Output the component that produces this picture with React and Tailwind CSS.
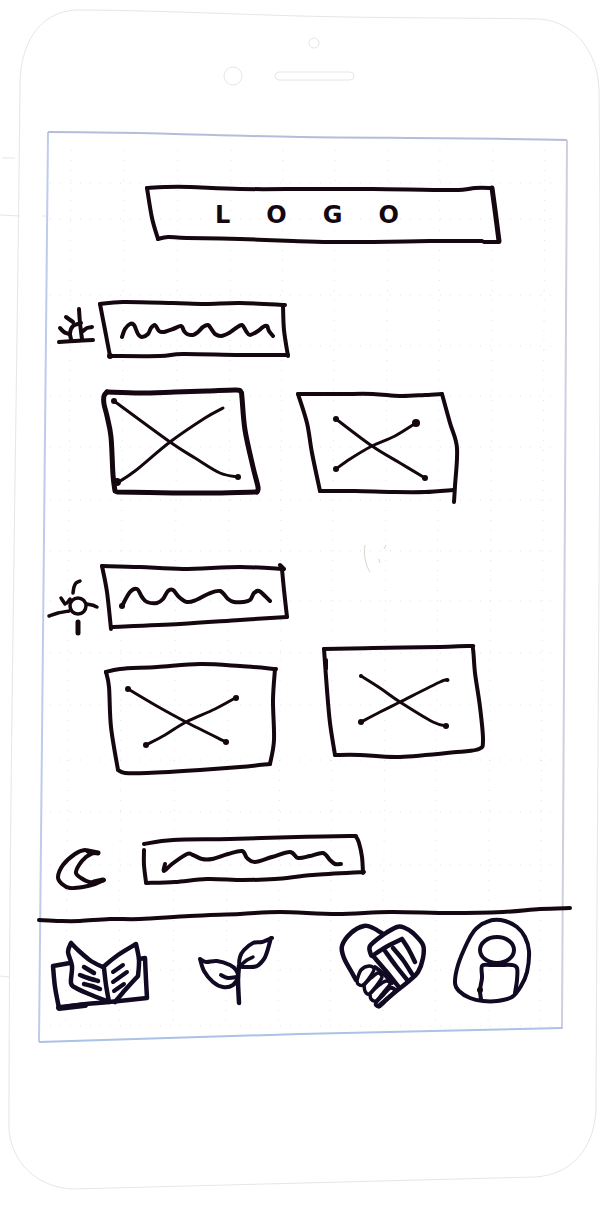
// Turns "x,y x,y | x,y x,y" into smooth pen strokes; "|" lifts the pen.
function pen(points) {
  return points
    .split("|")
    .map((part) => {
      const p = part.trim().split(/\s+/).map((s) => s.split(",").map(Number));
      let d = `M${p[0][0]} ${p[0][1]}`;
      for (let i = 0; i < p.length - 1; i++) {
        const a = p[i - 1] || p[i];
        const b = p[i];
        const c = p[i + 1];
        const e = p[i + 2] || c;
        d += `C${b[0] + (c[0] - a[0]) / 6} ${b[1] + (c[1] - a[1]) / 6} ${c[0] - (e[0] - b[0]) / 6} ${c[1] - (e[1] - b[1]) / 6} ${c[0]} ${c[1]}`;
      }
      return d;
    })
    .join("");
}

function Ink({ box, className, label, color = "stroke-[#14070f]", children }) {
  return (
    <svg
      viewBox={box}
      className={`block overflow-visible fill-none ${color} ${className}`}
      strokeWidth="4"
      strokeLinecap="round"
      strokeLinejoin="round"
      role={label ? "img" : undefined}
      aria-label={label}
      aria-hidden={label ? undefined : true}
    >
      {children}
    </svg>
  );
}

const P = ({ d, w }) => <path d={pen(d)} strokeWidth={w} />;
const Dot = ({ x, y, r = 3 }) => <circle cx={x} cy={y} r={r} className="fill-[#14070f] stroke-none" />;

const columns = [71, 124, 178, 231, 283, 335, 388, 440, 493, 545];
const rows = [183, 219, 295, 346, 396, 447, 500, 551, 601, 653, 705, 760, 812, 865, 970, 1026];

function Phone() {
  return (
    <svg
      viewBox="0 0 600 1212"
      preserveAspectRatio="none"
      className="pointer-events-none absolute inset-0 h-full w-full fill-none"
      aria-hidden="true"
    >
      <g stroke="#e6e6e8" strokeWidth="1">
        <path d="M76 10C140 10 230 14 300 16S480 18 540 19C575 22 598 52 599 90C602 350 597 800 596 1110C594 1150 570 1175 535 1177L72 1189C36 1187 12 1162 9 1130C9 800 17 400 20 85C20 45 38 12 76 10" />
        <circle cx="314" cy="43" r="5" />
        <circle cx="233" cy="76" r="9" />
        <rect x="275" y="72" width="79" height="8" rx="4" />
        <path d="M2 158H15M0 215L20 216M42 216H47M0 976L10 977" />
      </g>
      <g stroke="#e3e3e7" strokeWidth="1" strokeDasharray="1 9">
        {columns.map((x) => (
          <path key={x} d={`M${x} 150L${x - 5} 1030`} />
        ))}
        {rows.map((y) => (
          <path key={y} d={`M50 ${y}H560`} />
        ))}
      </g>
      <path d="M48 132L39 1042" stroke="#bfcbec" strokeWidth="2" />
      <path d="M48 132C150 132 220 136 300 137S480 138 567 140" stroke="#b5bddb" strokeWidth="2" />
      <path d="M567 140L562 1029" stroke="#cdcfe2" strokeWidth="2" />
      <path d="M39 1042L300 1034L562 1028" stroke="#a9c2e5" strokeWidth="2" />
      <path d="M365 545C363 554 366 566 370 572M379 559L380 563M386 545L384 549" stroke="#d9d5cc" strokeWidth="1" />
    </svg>
  );
}

function Logo() {
  return (
    <h1 className="mx-auto grid w-[360px] max-w-full">
      <Ink box="143 184 360 62" className="col-start-1 row-start-1 w-full">
        <P d="147,188 165,187 190,187 240,189 310,189 373,189 453,190 475,188 492,188" />
        <P d="492,188 495,210 499,241" w={5} />
        <P d="499,242 484,242 | 482,241 430,241 373,242 330,242 293,241 240,239 187,238 168,237 158,239" />
        <P d="158,239 152,218 147,188" />
      </Ink>
      <span
        className="col-start-1 row-start-1 flex items-center gap-9 pl-[72px] font-['DejaVu_Sans',sans-serif] text-2xl font-bold text-[#14070f]"
        aria-label="LOGO"
      >
        <span>L</span>
        <span>O</span>
        <span>G</span>
        <span>O</span>
      </span>
    </h1>
  );
}

function Morning() {
  return (
    <section className="mt-[52px]">
      <h2 className="flex">
        <Ink box="46 298 52 60" className="w-[52px]" label="Morning">
          <P d="59,342 75,341 93,340" />
          <P d="71,339 70,333 73,326 81,323 | 79,309 80,323 82,339" />
          <P d="66,317 73,322 | 60,328 64,332 69,334 | 83,331 87,328 92,327" />
        </Ink>
        <Ink box="98 298 194 60" className="w-[194px]" label="Morning title">
          <P d="100,304 123,302 173,303 205,304 240,303 285,305" />
          <P d="283,305 284,330 288,356" />
          <P d="288,355 240,355 183,354 160,356 110,356" />
          <P d="110,356 106,335 100,304" />
          <Dot x={110} y={356} />
          <P d="122,337 125,329 130,324 134,325 138,334 142,337 148,334 151,328 155,325 159,331 164,332 173,329 181,326 184,331 187,334 193,335 198,332 203,327 208,325 212,330 215,334 221,336 229,333 236,328 242,325 246,331 250,335 258,331 263,327 267,326 269,331 273,336" />
        </Ink>
      </h2>
      <ul className="mt-[30px] flex gap-[34px] pl-[54px]">
        <li>
          <Ink box="100 388 162 116" className="w-[162px]" label="Image placeholder">
            <P d="107,392 140,393 175,392 207,391 236,390 241,392 242,398 245,430 253,467 258,487 257,492" w={5} />
            <P d="257,492 215,493 173,493 117,492 | 115,491 113,475 111,437 107,416 104,404 104,396 107,392" w={5} />
            <P d="114,401 170,442 195,458 220,473 238,477 | 223,408 205,418 170,442 135,471 117,483" w={3} />
            <Dot x={114} y={401} />
            <Dot x={238} y={477} />
            <Dot x={117} y={482} r={4} />
          </Ink>
        </li>
        <li>
          <Ink box="296 388 164 116" className="w-[164px]" label="Image placeholder">
            <P d="298,394 340,394 373,394 400,396 425,395 442,394" />
            <P d="442,394 450,423 457,448 455,486 454,502" />
            <P d="453,490 425,492 393,492 355,491 320,491" />
            <P d="320,491 312,453 307,423 298,394" />
            <P d="336,419 372,446 400,463 425,478 | 416,423 395,436 372,446 350,459 336,469" w={3} />
            <Dot x={336} y={419} />
            <Dot x={425} y={478} />
            <Dot x={416} y={423} r={4} />
            <Dot x={336} y={469} />
          </Ink>
        </li>
      </ul>
    </section>
  );
}

function Midday() {
  return (
    <section className="mt-[59px]">
      <h2 className="flex">
        <Ink box="46 563 52 74" className="w-[52px]" label="Midday">
          <ellipse cx="78" cy="606" rx="8" ry="8" strokeWidth="3.5" />
          <P d="80,581 76,583 74,587 73,593 | 61,598 65,604 | 67,603 70,599 | 49,616 58,613 69,611 | 87,604 92,605 97,607" w={3.5} />
          <P d="78,622 78,633" w={5} />
        </Ink>
        <Ink box="98 563 194 74" className="w-[194px]" label="Midday title">
          <P d="102,566 140,567 183,569 240,567 284,569 | 280,565 284,569" />
          <P d="282,569 284,590 287,617" />
          <P d="287,617 240,620 180,624 111,627" />
          <P d="111,629 107,592 102,566" />
          <P d="122,606 130,592 137,589 142,597 147,602 157,603 163,599 168,591 173,590 179,597 187,602 196,600 208,594 220,591 228,599 234,602 243,602 250,600 254,593 259,591 265,596 270,601" />
          <Dot x={122} y={606} />
        </Ink>
      </h2>
      <ul className="mt-2 flex gap-10 pl-[57px]">
        <li className="self-end">
          <Ink box="103 662 176 113" className="w-[176px]" label="Image placeholder">
            <P d="106,672 120,669 157,667 200,664 240,666 276,669" />
            <P d="275,669 273,700 274,740 270,764" />
            <P d="270,764 240,767 200,770 147,773 125,773 118,770 | 118,770 111,727 109,687 106,672" />
            <P d="128,689 155,705 186,722 226,742 | 237,697 215,709 186,722 165,735 146,745" w={3} />
            <Dot x={128} y={689} />
            <Dot x={226} y={742} />
            <Dot x={236} y={698} />
            <Dot x={146} y={745} />
          </Ink>
        </li>
        <li className="pb-[18px]">
          <Ink box="319 645 168 112" className="w-[168px]" label="Image placeholder">
            <P d="324,649 373,648 440,647 470,646 473,649 475,673 480,707 483,740 479,749 457,752 400,757 360,755 335,755" />
            <P d="335,755 330,723 327,690 324,649 | 326,660 326,669" />
            <P d="361,676 380,688 400,702 433,722 447,726 | 448,680 440,682 400,702 380,712 361,722" w={3} />
            <Dot x={361} y={676} r={2} />
            <Dot x={446} y={726} />
            <Dot x={447} y={680} r={2} />
            <Dot x={361} y={722} />
          </Ink>
        </li>
      </ul>
    </section>
  );
}

function Evening() {
  return (
    <section className="mt-[59px]">
      <h2 className="flex gap-8">
        <Ink box="46 834 62 58" className="w-[62px]" label="Evening">
          <P d="98,853 91,853 85,850 75,854 63,865 58,877 62,884 70,888 83,887 95,884 104,880 | 104,880 96,882 89,882 81,878 76,873 79,865 86,857 93,853" />
          <P d="88,851 98,853 | 94,882 103,880" w={5} />
        </Ink>
        <Ink box="140 834 228 58" className="w-[228px]" label="Evening title">
          <P d="144,844 173,840 230,839 297,837 350,836 356,837 359,843 362,857 363,873" />
          <P d="364,872 313,875 275,879 243,880 207,879 175,882 146,883" />
          <P d="146,882 144,865 144,850" />
          <P d="165,864 164,871 172,864 187,854 193,855 202,859 212,859 228,854 242,851 247,858 255,862 272,857 290,852 298,858 310,856 323,853 330,860 335,864 341,864" />
        </Ink>
      </h2>
    </section>
  );
}

const tab = "block min-w-0 shrink";
const tabInk = "stroke-[#110a22]";

function TabBar() {
  return (
    <nav className="mt-3">
      <Ink box="46 904 528 12" className="w-full">
        <P d="39,920 60,921 80,921 110,919 140,919 190,916 240,914 280,912 337,914 390,912 450,913 503,912 540,909 570,908" />
      </Ink>
      <div className="flex">
        <a href="#journal" className={`${tab} w-[120px]`} aria-label="Journal">
          <Ink box="46 916 120 96" className="w-full" color={tabInk}>
            <P d="70,963 53,966 | 53,966 55,987 59,1008 | 59,1008 86,1004 109,1002 147,998 | 147,998 146,980 145,958 | 145,958 139,959" w={4.5} />
            <P d="59,1008 85,1005" w={6} />
            <P d="71,943 79,951 91,961 103,967 | 104,968 106,985 109,1002 | 109,1002 89,994 76,988 71,983 72,966 68,952 71,943" w={4.5} />
            <P d="103,967 118,955 136,944 | 136,944 139,960 138,976 | 138,976 126,989 115,1002" w={4.5} />
            <P d="84,967 94,973 | 80,975 88,978 98,981 | 84,984 92,986 100,989" w={4.5} />
            <P d="113,972 123,965 | 113,982 127,972 | 114,991 124,984" />
          </Ink>
        </a>
        <a href="#growth" className={`${tab} w-[140px]`} aria-label="Growth">
          <Ink box="166 916 140 96" className="w-full" color={tabInk}>
            <P d="200,959 206,962 217,961 230,965 236,970 238,977 233,985 223,987 213,982 204,971 200,959" />
            <P d="221,975 228,978 237,977" />
            <P d="239,966 238,980 239,1003" w={4.5} />
            <P d="272,938 262,942 253,943 244,950 240,957 240,966 248,967 257,966 264,959 267,952 271,938" />
            <P d="253,957 247,960 241,965" w={3.5} />
          </Ink>
        </a>
        <a href="#community" className={`${tab} w-[140px]`} aria-label="Community">
          <Ink box="306 916 140 96" className="w-full" color={tabInk}>
            <P d="383,934 373,928 364,926 351,933 342,946 344,958 351,971 356,980" w={4.5} />
            <P d="371,955 370,946 383,935 397,927 405,928 413,933 423,945 423,958 418,972 409,981 394,993 379,1006" w={4.5} />
            <P d="372,956 386,947 402,939 | 402,939 409,950 415,962" w={4.5} />
            <P d="374,957 386,971 398,986 | 385,951 396,966 408,981 | 393,948 403,960 412,974" w={4.5} />
            <P d="357,980 361,970 369,966 374,969 370,977 363,985 358,984 357,980" w={3.5} />
            <P d="364,985 371,978 378,973 382,977 377,985 369,994 365,991 364,985" w={3.5} />
            <P d="370,994 378,986 386,981 390,984 383,993 376,1001 371,999 370,994" w={3.5} />
            <P d="376,1002 383,995 390,988 395,991 387,999 380,1006 376,1005 376,1002" w={4} />
            <P d="375,967 384,974 392,983" />
          </Ink>
        </a>
        <a href="#profile" className={`${tab} w-[90px]`} aria-label="Profile">
          <Ink box="446 916 90 96" className="w-full" color={tabInk}>
            <P d="482,924 493,920 505,921 517,927 525,937 529,951 527,972 521,986 512,997 497,1001 483,1001 470,998 459,991 455,983 458,965 467,943 474,931 482,924" />
            <ellipse cx="497" cy="950" rx="17" ry="13" />
            <P d="481,999 480,990 482,978 482,966 490,965 500,965 512,965 517,968 517,980 515,993" />
            <Dot x={480} y={990} />
          </Ink>
        </a>
      </div>
    </nav>
  );
}

export default function App() {
  return (
    <div className="relative mx-auto w-full max-w-[600px] overflow-hidden bg-white">
      <Phone />
      <main className="relative pt-[184px] pr-[26px] pb-[200px] pl-[46px]">
        <div className="pl-[26px]">
          <Logo />
        </div>
        <Morning />
        <Midday />
        <Evening />
        <TabBar />
      </main>
    </div>
  );
}
